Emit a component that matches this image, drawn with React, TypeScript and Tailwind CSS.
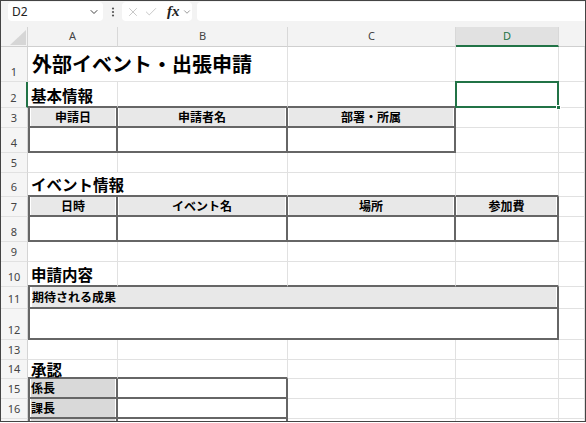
import React from "react";
import { ChevronDown, X, Check } from "lucide-react";

type Edge = "g" | "d";

function Cell({
  w,
  r = "g",
  b = "g",
  l = false,
  className = "",
  children,
}: {
  w: string;
  r?: Edge;
  b?: Edge;
  l?: boolean;
  className?: string;
  children?: React.ReactNode;
}) {
  const rc = r === "d" ? "border-r-2 border-r-[#666666]" : "border-r border-r-[#e1e1e1]";
  const bc = b === "d" ? "border-b-2 border-b-[#666666]" : "border-b border-b-[#e1e1e1]";
  const lc = l ? "border-l-2 border-l-[#666666]" : "";
  return <div className={`shrink-0 h-full ${w} ${rc} ${bc} ${lc} ${className}`}>{children}</div>;
}

function RH({ n, sel }: { n?: number; sel?: boolean }) {
  return (
    <div
      className={`w-[27px] shrink-0 h-full bg-[#f5f5f5] border-b border-b-[#e1e1e1] flex items-end justify-center pb-[4px] text-[11px] leading-none text-[#444] font-['Noto_Sans',sans-serif] ${
        sel ? "border-r-2 border-r-[#217346]" : "border-r border-r-[#d4d4d4]"
      }`}
    >
      {n}
    </div>
  );
}

const TH = "bg-[#e8e8e8] bg-clip-content px-[1px] flex items-center justify-center text-[12px] font-bold text-black leading-none";
const SEC = "flex items-end pl-[3px] text-[15.5px] font-bold text-black leading-none whitespace-nowrap";
const LAB = "bg-[#d9d9d9] bg-clip-content px-[1px] flex items-center text-[12px] font-bold text-black leading-none";

function Toolbar() {
  return (
    <div className="h-[26px] shrink-0 bg-[#f3f3f3] flex items-start pt-[1px] pl-[7px]">
      <div className="w-[95px] h-[19px] bg-white rounded-[4px] flex items-center justify-between pl-[4px] pr-[3px]">
        <span className="text-[12px] text-[#222] font-['Noto_Sans',sans-serif] leading-none">D2</span>
        <ChevronDown size={12} strokeWidth={2} className="text-[#444]" />
      </div>
      <div className="w-[19px] h-[19px] flex items-center justify-center">
        <svg width="4" height="10" viewBox="0 0 4 10">
          <circle cx="2" cy="1.5" r="1.1" fill="#555" />
          <circle cx="2" cy="5" r="1.1" fill="#555" />
          <circle cx="2" cy="8.5" r="1.1" fill="#555" />
        </svg>
      </div>
      <div className="w-[70px] h-[19px] bg-white rounded-[4px] flex items-center pl-[4px]">
        <X size={14} strokeWidth={1.2} className="text-[#b0b0b0]" />
        <Check size={14} strokeWidth={1.2} className="text-[#b0b0b0] ml-[4px]" />
        <span className="ml-[9px] text-[15px] italic font-semibold text-[#222] font-['Liberation_Serif',serif] leading-none">fx</span>
        <ChevronDown size={10} strokeWidth={1.6} className="text-[#666] ml-[2px]" />
      </div>
      <div className="ml-[5px] flex-1 h-[19px] bg-white rounded-l-[4px]" />
    </div>
  );
}

function HeaderRow() {
  const hc = "shrink-0 h-full border-r border-r-[#d8d8d8] border-b border-b-[#cfcfcf] flex items-center justify-center pb-[2px] text-[11px] text-[#444] font-['Noto_Sans',sans-serif] leading-none";
  return (
    <div className="h-[20px] shrink-0 flex bg-[#f3f3f3]">
      <div className="w-[27px] shrink-0 h-full border-r border-r-[#d4d4d4] border-b border-b-[#cfcfcf] flex items-end justify-end pr-[1px] pb-[1px]">
        <svg width="16" height="15" viewBox="0 0 16 15">
          <polygon points="0,15 16,15 16,0" fill="#d6d6d6" />
        </svg>
      </div>
      <div className={`${hc} w-[90px]`}>A</div>
      <div className={`${hc} w-[170px]`}>B</div>
      <div className={`${hc} w-[168px]`}>C</div>
      <div className="shrink-0 h-full w-[103px] bg-[#e1e1e1] border-r border-r-[#d8d8d8] border-b-2 border-b-[#217346] flex items-center justify-center pb-[1px] text-[11px] text-[#217346] font-['Noto_Sans',sans-serif] leading-none">
        D
      </div>
      <div className="flex-1 h-full border-b border-b-[#cfcfcf]" />
    </div>
  );
}

const E = "flex-1 min-w-0";

export default function App() {
  return (
    <div className="w-[586px] h-[422px] border border-[#444] overflow-hidden bg-white flex flex-col font-['Noto_Sans_CJK_JP','Noto_Sans',sans-serif]">
      <Toolbar />
      <HeaderRow />

      {/* 1 */}
      <div className="flex h-[35px] shrink-0">
        <RH n={1} />
        <Cell w="w-[260px]" className="flex items-end pl-[4px] pb-[7px] text-[20px] font-bold text-black leading-none whitespace-nowrap">
          外部イベント・出張申請
        </Cell>
        <Cell w="w-[168px]" />
        <Cell w="w-[103px]" />
        <Cell w={E} />
      </div>

      {/* 2 */}
      <div className="flex h-[26px] shrink-0">
        <RH n={2} sel />
        <Cell w="w-[90px]" b="d" className={`${SEC} pb-[3px]`}>
          基本情報
        </Cell>
        <Cell w="w-[170px]" b="d" />
        <Cell w="w-[168px]" b="d" />
        <Cell w="w-[103px]" className="relative">
          <div className="absolute left-[-1px] top-[-1px] w-[104px] h-[27px] border-2 border-[#217346] z-10" />
          <div className="absolute right-[-3px] bottom-[-3px] w-[5px] h-[5px] bg-[#217346] border border-white z-20" />
        </Cell>
        <Cell w={E} />
      </div>

      {/* 3 */}
      <div className="flex h-[20px] shrink-0">
        <RH n={3} />
        <Cell w="w-[90px]" l r="d" b="d" className={TH}>申請日</Cell>
        <Cell w="w-[170px]" r="d" b="d" className={TH}>申請者名</Cell>
        <Cell w="w-[168px]" r="d" b="d" className={TH}>部署・所属</Cell>
        <Cell w="w-[103px]" />
        <Cell w={E} />
      </div>

      {/* 4 */}
      <div className="flex h-[25px] shrink-0">
        <RH n={4} />
        <Cell w="w-[90px]" l r="d" b="d" />
        <Cell w="w-[170px]" r="d" b="d" />
        <Cell w="w-[168px]" r="d" b="d" />
        <Cell w="w-[103px]" />
        <Cell w={E} />
      </div>

      {/* 5 */}
      <div className="flex h-[20px] shrink-0">
        <RH n={5} />
        <Cell w="w-[90px]" />
        <Cell w="w-[170px]" />
        <Cell w="w-[168px]" />
        <Cell w="w-[103px]" />
        <Cell w={E} />
      </div>

      {/* 6 */}
      <div className="flex h-[24px] shrink-0">
        <RH n={6} />
        <Cell w="w-[260px]" b="d" className={`${SEC} pb-[3px]`}>
          イベント情報
        </Cell>
        <Cell w="w-[168px]" b="d" />
        <Cell w="w-[103px]" b="d" />
        <Cell w={E} />
      </div>

      {/* 7 */}
      <div className="flex h-[20px] shrink-0">
        <RH n={7} />
        <Cell w="w-[90px]" l r="d" b="d" className={TH}>日時</Cell>
        <Cell w="w-[170px]" r="d" b="d" className={TH}>イベント名</Cell>
        <Cell w="w-[168px]" r="d" b="d" className={TH}>場所</Cell>
        <Cell w="w-[103px]" r="d" b="d" className={TH}>参加費</Cell>
        <Cell w={E} />
      </div>

      {/* 8 */}
      <div className="flex h-[25px] shrink-0">
        <RH n={8} />
        <Cell w="w-[90px]" l r="d" b="d" />
        <Cell w="w-[170px]" r="d" b="d" />
        <Cell w="w-[168px]" r="d" b="d" />
        <Cell w="w-[103px]" r="d" b="d" />
        <Cell w={E} />
      </div>

      {/* 9 */}
      <div className="flex h-[20px] shrink-0">
        <RH n={9} />
        <Cell w="w-[90px]" />
        <Cell w="w-[170px]" />
        <Cell w="w-[168px]" />
        <Cell w="w-[103px]" />
        <Cell w={E} />
      </div>

      {/* 10 */}
      <div className="flex h-[25px] shrink-0">
        <RH n={10} />
        <Cell w="w-[90px]" b="d" className={`${SEC} pb-[3px]`}>
          申請内容
        </Cell>
        <Cell w="w-[170px]" b="d" />
        <Cell w="w-[168px]" b="d" />
        <Cell w="w-[103px]" b="d" />
        <Cell w={E} />
      </div>

      {/* 11 */}
      <div className="flex h-[22px] shrink-0">
        <RH n={11} />
        <Cell w="w-[531px]" l r="d" b="d" className="bg-[#e8e8e8] bg-clip-content px-[1px] flex items-center pl-[2px] text-[12px] font-bold text-black leading-none">
          期待される成果
        </Cell>
        <Cell w={E} />
      </div>

      {/* 12 */}
      <div className="flex h-[31px] shrink-0">
        <RH n={12} />
        <Cell w="w-[531px]" l r="d" b="d" />
        <Cell w={E} />
      </div>

      {/* 13 */}
      <div className="flex h-[20px] shrink-0">
        <RH n={13} />
        <Cell w="w-[90px]" />
        <Cell w="w-[170px]" />
        <Cell w="w-[168px]" />
        <Cell w="w-[103px]" />
        <Cell w={E} />
      </div>

      {/* 14 */}
      <div className="flex h-[19px] shrink-0">
        <RH n={14} />
        <Cell w="w-[90px]" b="d" className={`${SEC} pb-[0px]`}>
          承認
        </Cell>
        <Cell w="w-[170px]" b="d" />
        <Cell w="w-[168px]" />
        <Cell w="w-[103px]" />
        <Cell w={E} />
      </div>

      {/* 15 */}
      <div className="flex h-[20px] shrink-0">
        <RH n={15} />
        <Cell w="w-[90px]" l r="d" b="d" className={LAB}>係長</Cell>
        <Cell w="w-[170px]" r="d" b="d" />
        <Cell w="w-[168px]" />
        <Cell w="w-[103px]" />
        <Cell w={E} />
      </div>

      {/* 16 */}
      <div className="flex h-[20px] shrink-0">
        <RH n={16} />
        <Cell w="w-[90px]" l r="d" b="d" className={LAB}>課長</Cell>
        <Cell w="w-[170px]" r="d" b="d" />
        <Cell w="w-[168px]" />
        <Cell w="w-[103px]" />
        <Cell w={E} />
      </div>

      {/* 17 (cut off) */}
      <div className="flex h-[20px] shrink-0">
        <RH />
        <Cell w="w-[90px]" l r="d" b="d" className={LAB} />
        <Cell w="w-[170px]" r="d" b="d" />
        <Cell w="w-[168px]" />
        <Cell w="w-[103px]" />
        <Cell w={E} />
      </div>
    </div>
  );
}
